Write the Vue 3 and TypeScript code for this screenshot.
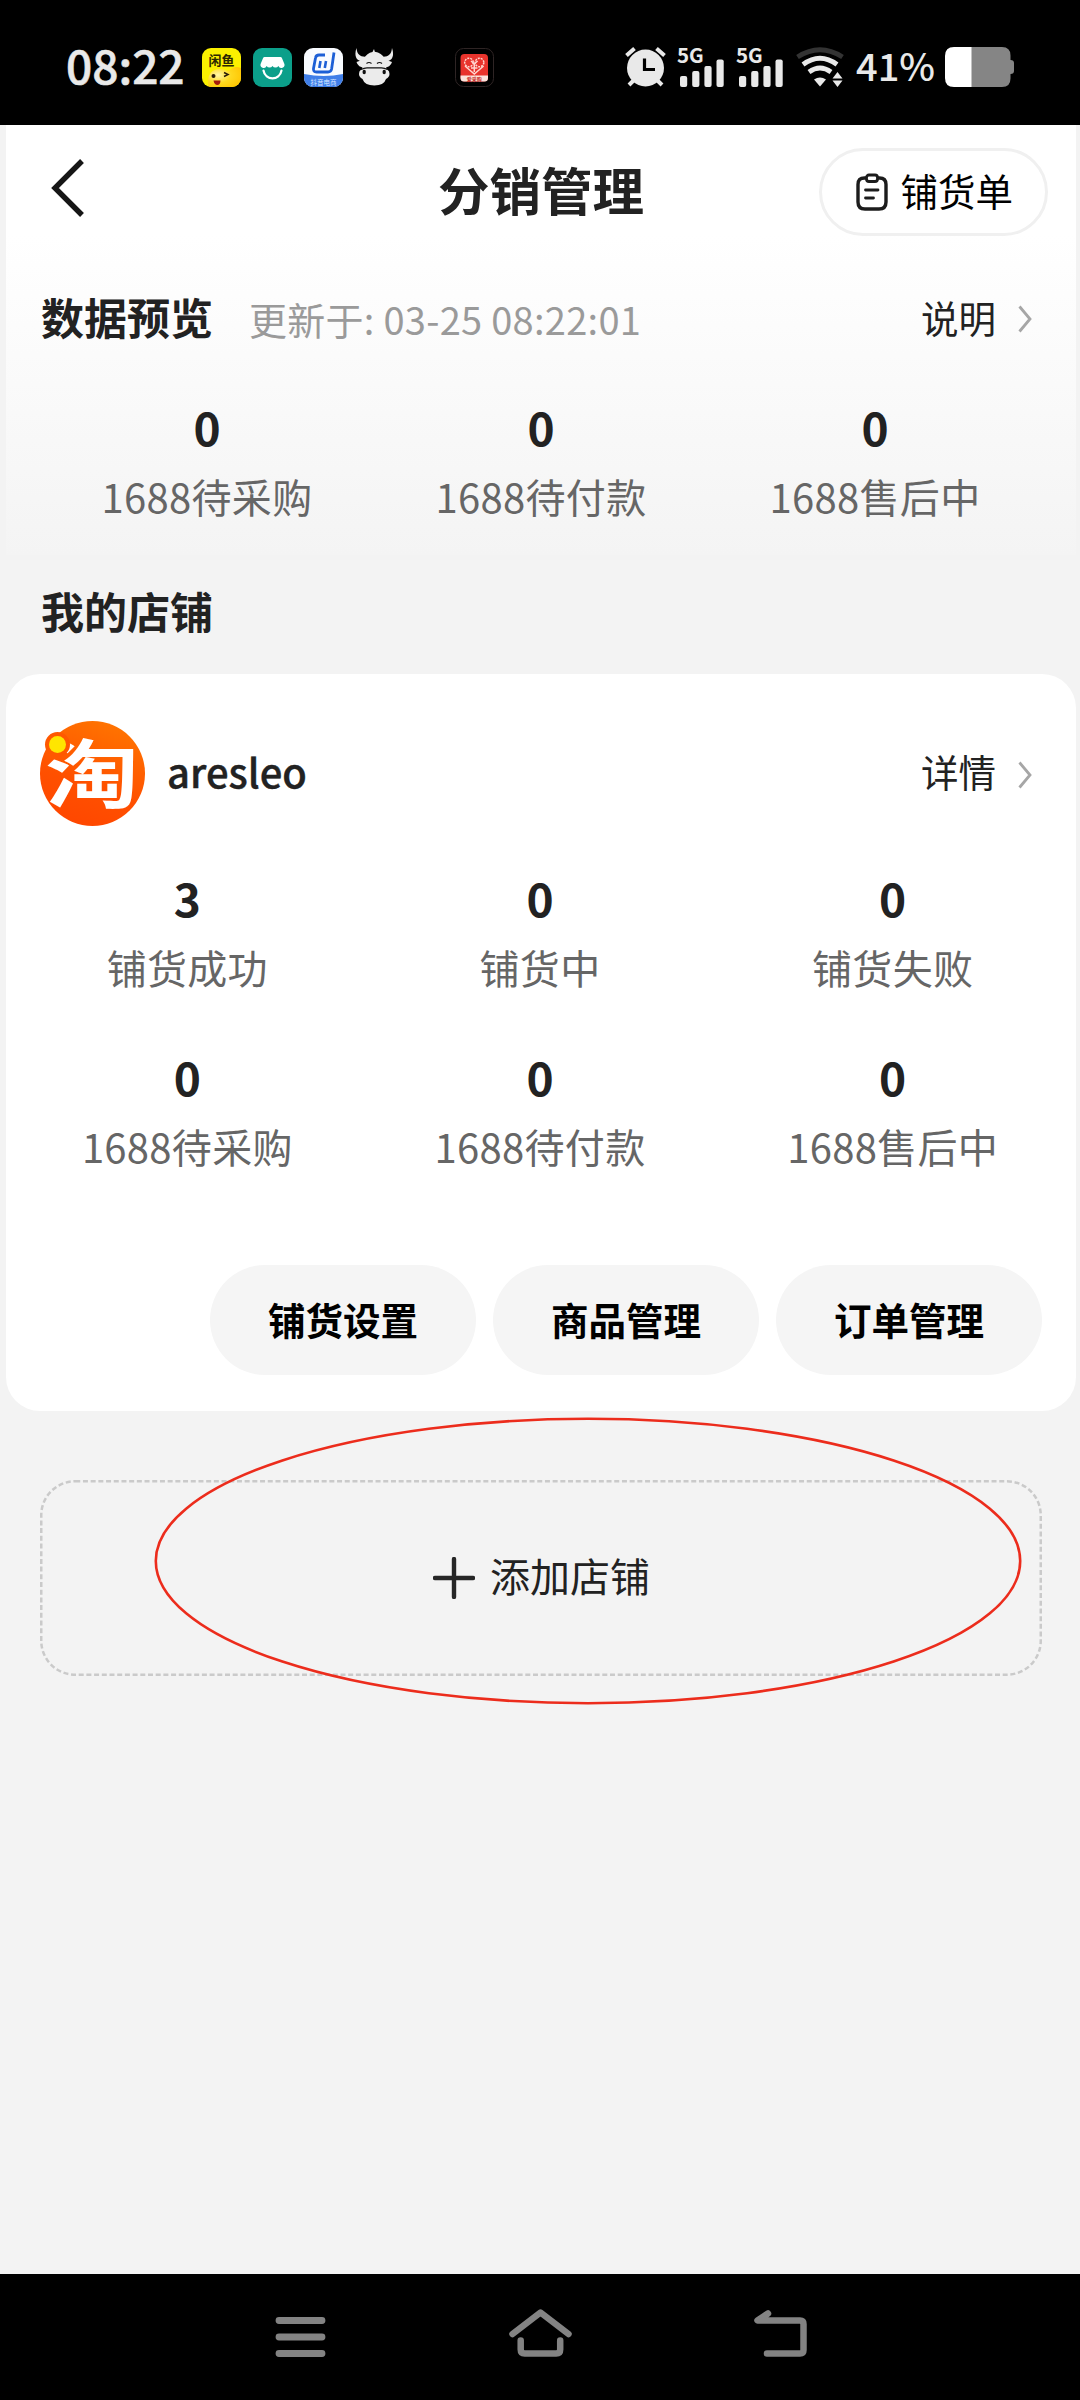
<script setup lang="ts">
interface Stat {
  value: number
  label: string
}

const overview: Stat[] = [
  { value: 0, label: '1688待采购' },
  { value: 0, label: '1688待付款' },
  { value: 0, label: '1688售后中' },
]

const shopStats: Stat[] = [
  { value: 3, label: '铺货成功' },
  { value: 0, label: '铺货中' },
  { value: 0, label: '铺货失败' },
  ...overview,
]

const actions: string[] = ['铺货设置', '商品管理', '订单管理']
</script>

<template>
  <div class="phone">
    <header class="status">
      <span class="clock">08:22</span>
      <svg class="app" width="39" height="39" viewBox="0 0 39 39">
        <defs>
          <clipPath id="tile"><rect width="39" height="39" rx="9" /></clipPath>
          <radialGradient id="fish" cx="0.3" cy="0.4" r="0.8">
            <stop offset="0" stop-color="#fff6a8" />
            <stop offset="0.5" stop-color="#ffd91f" />
            <stop offset="1" stop-color="#ffc400" />
          </radialGradient>
        </defs>
        <g clip-path="url(#tile)">
          <rect width="39" height="39" fill="#fbf000" />
          <path d="M7 39C4 31 8 21 17 21c6 0 8 3 11 1 3-3 6-4 11-2v19z" fill="url(#fish)" />
          <text x="19.5" y="17" text-anchor="middle" font-size="13" font-weight="700" fill="#2b2700">闲鱼</text>
          <circle cx="11.500" cy="28" r="2" fill="#2a1c08" />
          <path d="M22 24.500l4 2-4 2" fill="none" stroke="#2a1c08" stroke-width="1.500" />
          <path d="M11.500 32.500h7c0 6-6 6-7 0z" fill="#a51c0c" />
        </g>
      </svg>
      <svg class="app" width="39" height="39" viewBox="0 0 39 39">
        <rect width="39" height="39" rx="9" fill="#0b9f8a" />
        <path d="M11.500 9h16q1 0 1.400 1l2.300 5.500a3 3 0 0 1-5.800 2.500 3.500 3.500 0 0 1-5.900 0 3.500 3.500 0 0 1-5.900 0A3 3 0 0 1 7.800 15.500L10.100 10q.4-1 1.400-1z" fill="#fff" />
        <path d="M10.500 22.500c1.800 10.500 16.200 10.500 18 0" fill="none" stroke="#fff" stroke-width="2.200" stroke-linecap="round" />
      </svg>
      <svg class="app" width="39" height="39" viewBox="0 0 39 39">
        <g clip-path="url(#tile)">
          <rect width="39" height="39" fill="#f8fbff" />
          <path d="M0 26q20 4 39 0v13H0z" fill="#3f7ee8" />
          <g fill="none" stroke="#1c5fd6" stroke-width="2.800" stroke-linejoin="round">
            <path d="M21 7h-6q-3 0-3.500 3L9.500 20.500q-.5 3.500 3 3.500H24q3 0 3.600-3L30 4.500" />
            <path d="M16.500 13l-1.200 7M22 13l-1.200 7" stroke-width="2.600" />
          </g>
          <text x="19.500" y="37" text-anchor="middle" font-size="6.500" fill="#dce9ff">抖音电商</text>
        </g>
      </svg>
      <svg class="app" width="39" height="39" viewBox="0 0 39 39">
        <g fill="#ebebeb">
          <path d="M1.500 0C-1.500 9 2 14 9.500 13.500L12.500 8.500C6 9.500 2 7 1.500 0zM37 0c3 9-.5 14-8 13.500L26 8.500C32.500 9.500 36.500 7 37 0z" />
          <path d="M1.500 14q4.500-2.500 8.500-1v6.500q-7 0-8.500-5.500zM37 14q-4.500-2.500-8.500-1v6.500q7 0 8.500-5.500z" />
          <path d="M8.500 11q3.500-6 9-7l1.500-3 .8 2.800q6.700.7 10.200 7.200l1.500 11h-24.500z" />
          <path d="M11 20.500h16.500q7 0 7 5.500 0 3-3.500 5-2 6.500-11.700 6.500T7.500 31Q4 29 4 26q0-5.500 7-5.500z" />
        </g>
        <g fill="none" stroke="#111" stroke-width="1.200">
          <path d="M11.500 15.500q2.500-2 5 0M22 15.500q2.500-2 5 0M6 21.500q3-1.700 6-1.700h14.500q3 0 6 1.700" />
        </g>
        <ellipse cx="9.200" cy="24" rx="1.700" ry="2.200" fill="#111" />
        <ellipse cx="29.200" cy="24" rx="1.700" ry="2.200" fill="#111" />
      </svg>
      <svg class="tray" width="39" height="39" viewBox="0 0 39 39">
        <rect x=".5" y=".5" width="38" height="38" rx="8" fill="#000" stroke="#2e2424" />
        <rect x="5.500" y="6" width="27.500" height="27.500" rx="4" fill="#e8332c" />
        <g fill="none" stroke="#ffd5ce" stroke-width="1.500">
          <circle cx="14" cy="14.500" r="4.300" stroke-dasharray="2 1" />
          <circle cx="24.500" cy="14.500" r="4.300" stroke-dasharray="2 1" />
          <path d="M10 18l9.300 8 9.300-8M16 13l3.300 3 3.300-3M16 20h6.500M19.300 15v9" />
        </g>
        <path d="M5.500 27.500H33V30a3.500 3.500 0 0 1-3.500 3.500H9A3.500 3.500 0 0 1 5.500 30z" fill="#fbe3dc" />
        <text x="19.300" y="32.700" text-anchor="middle" font-size="5" font-weight="700" fill="#c52a22">爱采购</text>
      </svg>

      <svg class="alarm" width="41" height="40" viewBox="0 0 41 40">
        <g stroke="#e9e9e9" stroke-width="4" stroke-linecap="butt">
          <path d="M1.500 8.500l8-7M39.500 8.500l-8-7M4 38l5-5M37 38l-5-5" />
        </g>
        <circle cx="20.500" cy="21" r="18.500" fill="#e9e9e9" />
        <path d="M19.500 11.500v11h10.500" fill="none" stroke="#000" stroke-width="3.200" />
      </svg>
      <svg v-for="n in 2" :key="n" class="signal" width="48" height="40" viewBox="0 0 48 40">
        <text x="-1" y="15.500" font-size="20.500" font-weight="700" fill="#e9e9e9">5G</text>
        <g fill="#e9e9e9">
          <rect x="2" y="29" width="7.200" height="11" rx="2" />
          <rect x="14.200" y="24" width="7.200" height="16" rx="2" />
          <rect x="26.400" y="19" width="7.200" height="21" rx="2" />
          <rect x="38.500" y="12.500" width="7.200" height="27.500" rx="2" />
        </g>
      </svg>
      <svg class="wifi" width="48" height="40" viewBox="0 0 48 40">
        <g fill="none" stroke="#e9e9e9" stroke-width="4.800">
          <path d="M1.500 10q22.500-14.500 45 0" stroke="#333" />
          <path d="M7 17.500q17-12.500 34 0" />
          <path d="M13 25q11-8 22 0" />
        </g>
        <path d="M18 32.500q6-4 12 0l-6 7z" fill="#e9e9e9" />
        <path d="M36.500 31.500l5-6.500 5 6.500zM36.500 33.500h10l-5 6.500z" fill="#e9e9e9" />
      </svg>
      <span class="percent">41%</span>
      <svg class="battery" width="70" height="40" viewBox="0 0 70 40">
        <path d="M9 0h48q8.500 0 8.500 8.500V13q3.500 0 3.500 3v8q0 3-3.500 3v4.500q0 8.500-8.500 8.500H9z" fill="#858585" />
        <path d="M26.500 0H9Q0 0 0 9v22q0 9 9 9h17.500z" fill="#fff" />
      </svg>
    </header>

    <section class="panel">
      <div class="titlebar">
        <svg class="back" width="40" height="66" viewBox="0 0 40 66">
          <path d="M37 6L10 33l27 27" fill="none" stroke="#161616" stroke-width="5.400" />
        </svg>
        <h1>分销管理</h1>
        <div class="list-button">
          <svg width="32" height="38" viewBox="0 0 32 38" fill="none" stroke="#1c1c1c">
            <path d="M10 5H8.500Q2 5 2 11.500V29q0 7 7 7h14q7 0 7-7V11.500Q30 5 23.500 5H22" stroke-width="3.400" />
            <rect x="10.500" y="2" width="11" height="6.500" rx="2.500" stroke-width="2.800" />
            <path d="M9.500 17h12.500M9.500 25h8" stroke-width="2.800" stroke-linecap="round" />
          </svg>
          <span>铺货单</span>
        </div>
      </div>

      <div class="row preview">
        <h2>数据预览</h2>
        <span class="updated">更新于: 03-25 08:22:01</span>
        <span class="link">说明</span>
        <svg class="chevron" width="14" height="28" viewBox="0 0 14 28">
          <path d="M1.500 1.500l10.500 12.500-10.500 12.500" fill="none" stroke="#a6a6a6" stroke-width="2.800" />
        </svg>
      </div>

      <div class="stats overview">
        <div v-for="item in overview" :key="item.label" class="stat">
          <b>{{ item.value }}</b>
          <span>{{ item.label }}</span>
        </div>
      </div>
    </section>

    <h2 class="section-title">我的店铺</h2>

    <section class="card">
      <div class="row shop">
        <div class="logo">
          <span class="mark">淘</span>
          <i class="dot"></i>
        </div>
        <span class="name">aresleo</span>
        <span class="link">详情</span>
        <svg class="chevron" width="14" height="28" viewBox="0 0 14 28">
          <path d="M1.500 1.500l10.500 12.500-10.500 12.500" fill="none" stroke="#a6a6a6" stroke-width="2.800" />
        </svg>
      </div>

      <div class="stats shop-stats">
        <div v-for="item in shopStats" :key="item.label" class="stat">
          <b>{{ item.value }}</b>
          <span>{{ item.label }}</span>
        </div>
      </div>

      <div class="actions">
        <div v-for="action in actions" :key="action" class="action">{{ action }}</div>
      </div>
    </section>

    <div class="add">
      <svg class="dashes" width="1002" height="196" viewBox="0 0 1002 196">
        <rect x="1.250" y="1.250" width="999.500" height="193.500" rx="34" fill="none" stroke="#cacaca" stroke-width="2.500" stroke-dasharray="5 2.700" />
      </svg>
      <svg class="plus" width="42" height="42" viewBox="0 0 42 42">
        <path d="M21 2v38M2 21h38" stroke="#262626" stroke-width="4.400" stroke-linecap="round" />
      </svg>
      <span>添加店铺</span>
      <svg class="ring" width="868" height="288" viewBox="0 0 868 288">
        <ellipse cx="434" cy="144" rx="432.200" ry="142.200" fill="none" stroke="#ec2c1c" stroke-width="2.600" />
      </svg>
    </div>

    <nav class="nav">
      <svg width="1080" height="126" viewBox="0 0 1080 126" fill="none" stroke="#838383" stroke-width="6.800" stroke-linecap="round" stroke-linejoin="round">
        <path d="M279 46.500h43M279 63h43M279 79.500h43" />
        <path d="M512.500 60L540.500 38.500 568.500 60M520.700 66.500v9q0 4 4 4h31.500q4 0 4-4v-9" stroke-width="6.500" />
        <path d="M768 39.500l-10.500 7H800q3.500 0 3.500 3.500v26q0 3.500-3.500 3.500h-33" stroke-width="6.500" />
      </svg>
    </nav>
  </div>
</template>

<style>
body {
  margin: 0;
  background: #f3f3f3;
}
</style>

<style scoped>
.phone {
  width: 1080px;
  height: 2400px;
  display: flex;
  flex-direction: column;
  overflow: hidden;
  background: #f3f3f3;
  color: #222;
  font-family: "Noto Sans CJK SC", "Noto Sans", sans-serif;
}

svg {
  display: block;
  flex: none;
}

h1,
h2 {
  margin: 0;
  white-space: nowrap;
}

.status {
  flex: none;
  height: 125px;
  box-sizing: border-box;
  padding: 9px 65px 0 66px;
  display: flex;
  align-items: center;
  background: #000;
  color: #e9e9e9;
}

.clock {
  width: 124px;
  margin-right: 12px;
  font-size: 46px;
  line-height: 60px;
  font-weight: 500;
  margin-top: -7px;
  white-space: nowrap;
  -webkit-text-stroke: 0.600px #e9e9e9;
}

.app {
  margin-right: 12px;
}

.tray {
  margin-left: 49px;
}

.alarm {
  margin-left: auto;
  margin-right: 12px;
}

.signal {
  margin-right: 11px;
  overflow: visible;
}

.wifi {
  margin-right: 12px;
}

.percent {
  width: 78px;
  margin-right: 11px;
  margin-top: -5px;
  font-size: 38px;
  line-height: 56px;
  font-weight: 500;
}

.panel {
  flex: none;
  height: 430px;
  margin: 0 4px 0 6px;
  background: linear-gradient(#fff 0, #fff 110px, #fbfbfb 230px, #f4f4f4 430px);
}

.titlebar {
  height: 134px;
  padding: 0 28px 0 39px;
  display: grid;
  grid-template-columns: 1fr auto 1fr;
  align-items: center;
}

.back {
  margin-top: -9px;
}

h1 {
  padding-bottom: 6px;
  margin-left: -11px;
  font-size: 51.500px;
  line-height: 70px;
  font-weight: 700;
}

.list-button {
  justify-self: end;
  width: 229px;
  height: 88px;
  box-sizing: border-box;
  padding-left: 33.500px;
  border: 3px solid #f0f0f0;
  border-radius: 44px;
  display: flex;
  align-items: center;
  gap: 13px;
  color: #000;
  font-size: 37.500px;
}

.list-button span {
  line-height: 50px;
  padding-bottom: 4px;
}

.row {
  display: flex;
  align-items: center;
}

.preview {
  height: 116px;
  padding: 0 44px 0 35px;
}

h2 {
  font-size: 43px;
  line-height: 60px;
  font-weight: 700;
}

.preview h2 {
  margin-top: -2px;
}

.updated {
  margin: 4px 0 0 36px;
  font-size: 38px;
  line-height: 52px;
  letter-spacing: 0.280px;
  color: #9a9a9a;
  white-space: nowrap;
}

.link {
  margin-left: auto;
  font-size: 37.500px;
  line-height: 52px;
  color: #222;
}

.shop .link {
  margin-top: -5px;
}

.chevron {
  margin: 3px 0 0 22px;
}

.stats {
  display: grid;
  grid-template-columns: repeat(3, 1fr);
}

.overview {
  margin: 21px 34px 0;
}

.stat {
  display: flex;
  flex-direction: column;
  align-items: center;
  gap: 12px;
}

.stat b {
  font-size: 46px;
  line-height: 60px;
  font-weight: 700;
}

.stat span {
  font-size: 40px;
  line-height: 56px;
  letter-spacing: 0.300px;
  color: #666;
}

.section-title {
  flex: none;
  padding: 25px 0 34px 41px;
}

.card {
  flex: none;
  height: 737px;
  margin: 0 4px 0 6px;
  box-sizing: border-box;
  padding-top: 47px;
  border-radius: 34px;
  background: #fff;
}

.shop {
  height: 105px;
  padding: 0 44px 0 34px;
}

.logo {
  position: relative;
  flex: none;
  width: 105px;
  height: 105px;
  border-radius: 50%;
  background: linear-gradient(200deg, #ff7a00, #ff5000 60%, #ff4400);
  display: flex;
  align-items: center;
  justify-content: center;
}

.mark {
  font-size: 78px;
  line-height: 105px;
  font-weight: 700;
  color: #fff;
  transform: translateY(-4px) scale(1.200, 0.960);
}

.dot {
  position: absolute;
  left: 9px;
  top: 15px;
  width: 17px;
  height: 17px;
  border-radius: 50%;
  background: #ffe600;
  box-shadow: 0 0 0 4px #ff5800;
}

.name {
  margin: -6px 0 0 22px;
  font-size: 40px;
  line-height: 60px;
  font-weight: 500;
  -webkit-text-stroke: 0.400px #222;
}

.shop-stats {
  margin: 41px 7px 0 5px;
  row-gap: 51px;
}

.actions {
  margin: 91px 34px 0 0;
  display: flex;
  justify-content: flex-end;
  gap: 17px;
}

.action {
  width: 266px;
  height: 110px;
  border-radius: 55px;
  background: #f5f5f5;
  color: #000;
  font-size: 37.500px;
  line-height: 107px;
  font-weight: 700;
  text-align: center;
}

.add {
  position: relative;
  flex: none;
  height: 196px;
  margin: 69px 38px 0 40px;
  display: flex;
  align-items: center;
  justify-content: center;
  gap: 15px;
  font-size: 40px;
}

.plus {
  margin-left: 1px;
}

.add span {
  line-height: 56px;
  padding-bottom: 6px;
}

.dashes {
  position: absolute;
  left: 0;
  top: 0;
}

.ring {
  position: absolute;
  left: 114px;
  top: -63px;
}

.nav {
  flex: none;
  height: 126px;
  margin-top: auto;
  background: #000;
}
</style>
